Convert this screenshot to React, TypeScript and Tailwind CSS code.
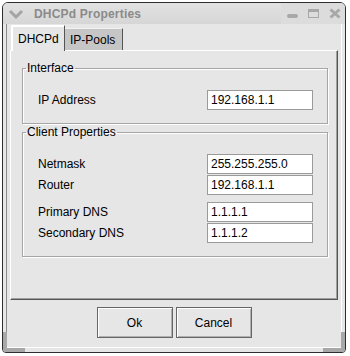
import React from 'react';

const font = { fontFamily: '"Liberation Sans", Arial, sans-serif' };

interface FieldRowProps {
  label: string;
  value: string;
}

const FieldRow: React.FC<FieldRowProps> = ({ label, value }) => (
  <div className="flex items-center justify-between pl-[15px] pr-[14px]">
    <span className="text-[12px] leading-[14px] text-black">{label}</span>
    <div className="w-[106px] h-[20px] bg-white border border-[#9a9a9a] flex items-center px-[3px] text-[12px] text-black">
      {value}
    </div>
  </div>
);

const GroupBox: React.FC<{ title: string; className?: string; children: React.ReactNode }> = ({
  title,
  className = '',
  children,
}) => (
  <fieldset
    className={`border border-[#a6a6a6] shadow-[inset_1px_1px_0_#ffffff,1px_1px_0_#ffffff] ${className}`}
  >
    <legend className="ml-[3px] px-[1px] text-[12px] leading-[14px] text-black">{title}</legend>
    {children}
  </fieldset>
);

export default function App() {
  return (
    <div className="w-[350px] h-[356px] bg-white pt-[2px] pl-[2px]" style={font}>
      <div className="relative w-[344px] h-[351px] border border-[#2e2e2e] rounded-t-[6px] rounded-b-[4px] bg-[#e6e6e6] flex flex-col overflow-hidden">
        {/* Title bar */}
        <div className="h-[21px] shrink-0 flex items-center bg-gradient-to-b from-[#e2e2e2] to-[#d6d6d6]">
          <svg width="16" height="12" viewBox="0 0 16 12" className="ml-[5px]">
            <path d="M2 3 L8 9 L14 3" fill="none" stroke="#a4a4a4" strokeWidth="3" />
          </svg>
          <span className="ml-[10px] text-[12px] font-bold text-[#8a8a8a] tracking-[0.2px]">
            DHCPd Properties
          </span>
          <div className="ml-auto h-full flex items-center gap-[10px] pl-[6px] pr-[4px] bg-[#dcdcdc]">
            <div className="w-[11px] h-[4px] rounded-[2px] bg-[#a8a8a8] mt-[4px]" />
            <div className="w-[11px] h-[9px] border border-[#a8a8a8] border-t-[3px]" />
            <svg width="12" height="11" viewBox="0 0 12 11">
              <path d="M1.5 1.5 L10.5 9.5 M10.5 1.5 L1.5 9.5" stroke="#a8a8a8" strokeWidth="3" />
            </svg>
          </div>
        </div>

        {/* Window frame */}
        <div className="flex-1 px-[3px] pb-[4px] flex flex-col">
          <div className="flex-1 border-l border-r border-l-[#8c8c8c] border-r-[#ffffff] border-b border-b-white flex flex-col">
            {/* Notebook */}
            <div className="ml-[3px] mr-[3px] mt-[1px]">
              <div className="flex items-end pl-[1px]">
                <div className="relative z-10 -mb-[1px] w-[54px] h-[26px] bg-[#e6e6e6] border-l border-t border-r border-l-white border-t-white border-r-[#555555] shadow-[inset_1px_1px_0_#ffffff] flex items-center pl-[6px] text-[12px] text-black">
                  DHCPd
                </div>
                <div className="w-[58px] h-[22px] bg-[#c6c6c6] border-t border-r border-t-[#f2f2f2] border-r-[#555555] flex items-center pl-[5px] text-[12px] text-black">
                  IP-Pools
                </div>
              </div>
              <div className="h-[250px] border border-t-white border-l-white border-r-[#555555] border-b-[#555555] shadow-[inset_-1px_-1px_0_#a0a0a0] pt-[10px] pl-[11px] pr-[9px]">
                <GroupBox title="Interface" className="pb-[13px]">
                  <div className="pt-[15px]">
                    <FieldRow label="IP Address" value="192.168.1.1" />
                  </div>
                </GroupBox>
                <GroupBox title="Client Properties" className="mt-[1px] pb-[13px]">
                  <div className="pt-[15px] flex flex-col">
                    <div className="flex flex-col gap-[1px]">
                      <FieldRow label="Netmask" value="255.255.255.0" />
                      <FieldRow label="Router" value="192.168.1.1" />
                    </div>
                    <div className="flex flex-col gap-[1px] mt-[7px]">
                      <FieldRow label="Primary DNS" value="1.1.1.1" />
                      <FieldRow label="Secondary DNS" value="1.1.1.2" />
                    </div>
                  </div>
                </GroupBox>
              </div>
            </div>

            {/* Buttons */}
            <div className="flex justify-center gap-[3px] mt-[7px]">
              <button className="w-[76px] h-[31px] bg-[#e6e6e6] border border-[#666666] shadow-[inset_1px_1px_0_#ffffff,inset_-1px_-1px_0_#b0b0b0] text-[12px] text-black">
                Ok
              </button>
              <button className="w-[76px] h-[31px] bg-[#e6e6e6] border border-[#666666] shadow-[inset_1px_1px_0_#ffffff,inset_-1px_-1px_0_#b0b0b0] text-[12px] text-black">
                Cancel
              </button>
            </div>
          </div>
        </div>

        {/* Resize corners */}
        <div className="absolute left-0 bottom-0 w-[4px] h-[20px] bg-[#a8a8a8]" />
        <div className="absolute left-0 bottom-0 w-[22px] h-[4px] bg-[#a8a8a8]" />
        <div className="absolute right-0 bottom-0 w-[4px] h-[20px] bg-[#a8a8a8]" />
        <div className="absolute right-0 bottom-0 w-[22px] h-[4px] bg-[#a8a8a8]" />
      </div>
    </div>
  );
}
